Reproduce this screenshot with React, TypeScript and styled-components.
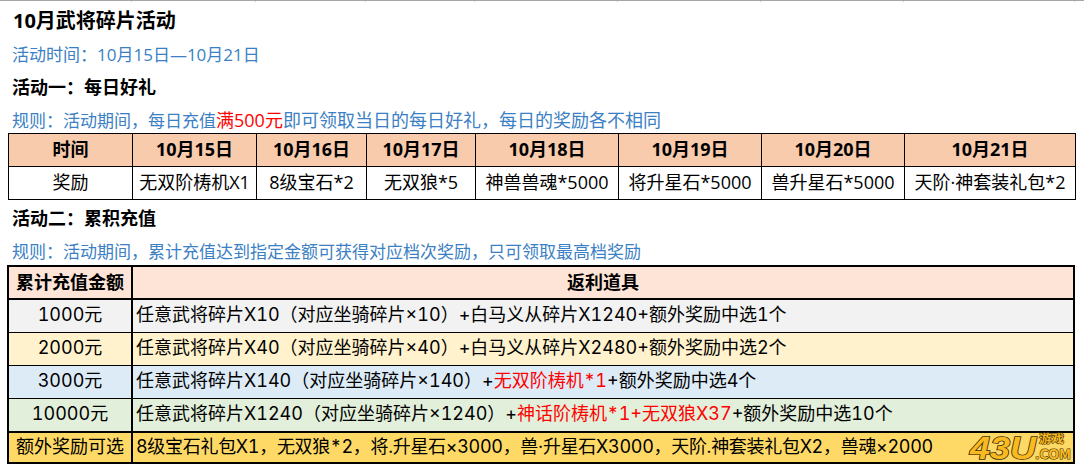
import React from 'react'
import styled, { createGlobalStyle } from 'styled-components'

const GlobalStyle = createGlobalStyle`
  html, body {
    margin: 0;
    padding: 0;
    background: #fff;
    color: #000;
    font-family: "Open Sans", "Noto Sans CJK SC", sans-serif;
  }
`

const dailyColumns = [124, 124, 110, 109, 143, 143, 143, 171]
const dailyRows = [
  ['时间', '10月15日', '10月16日', '10月17日', '10月18日', '10月19日', '10月20日', '10月21日'],
  ['奖励', '无双阶梼机X1', '8级宝石*2', '无双狼*5', '神兽兽魂*5000', '将升星石*5000', '兽升星石*5000', '天阶·神套装礼包*2'],
]

const Red = styled.span`
  color: #ff0000;
`

const RuleTail = styled.span`
  font-size: 18px;
`

const rebateRows: { tone: string; amount: string; content: React.ReactNode }[] = [
  {
    tone: '#f2f2f2',
    amount: '1000元',
    content: '任意武将碎片X10（对应坐骑碎片×10）+白马义从碎片X1240+额外奖励中选1个',
  },
  {
    tone: '#fff2cc',
    amount: '2000元',
    content: '任意武将碎片X40（对应坐骑碎片×40）+白马义从碎片X2480+额外奖励中选2个',
  },
  {
    tone: '#ddebf7',
    amount: '3000元',
    content: (
      <>
        任意武将碎片X140（对应坐骑碎片×140）+<Red>无双阶梼机*1</Red>+额外奖励中选4个
      </>
    ),
  },
  {
    tone: '#e2efda',
    amount: '10000元',
    content: (
      <>
        任意武将碎片X1240（对应坐骑碎片×1240）+<Red>神话阶梼机*1+无双狼X37</Red>+额外奖励中选10个
      </>
    ),
  },
]

export default function App() {
  return (
    <Page>
      <GlobalStyle />
      <Ruler>
        {dailyColumns.map((w, i) => (
          <RulerCell key={i} $width={w} />
        ))}
      </Ruler>
      <Title>10月武将碎片活动</Title>
      <Note $height={34}>活动时间：10月15日—10月21日</Note>
      <Heading $height={32}>活动一：每日好礼</Heading>
      <Note $height={33}>
        规则：活动期间，每日充值
        <RuleTail>
          <Red>满500元</Red>即可领取当日的每日好礼，每日的奖励各不相同
        </RuleTail>
      </Note>
      <DailyTable>
        <colgroup>
          {dailyColumns.map((w, i) => (
            <col key={i} style={{ width: w }} />
          ))}
        </colgroup>
        <tbody>
          <tr>
            {dailyRows[0].map((t) => (
              <DailyHead key={t}>{t}</DailyHead>
            ))}
          </tr>
          <tr>
            {dailyRows[1].map((t) => (
              <DailyCell key={t}>{t}</DailyCell>
            ))}
          </tr>
        </tbody>
      </DailyTable>
      <Heading $height={31}>活动二：累积充值</Heading>
      <Note $height={34}>规则：活动期间，累计充值达到指定金额可获得对应档次奖励，只可领取最高档奖励</Note>
      <RebateWrap>
        <RebateTable>
          <colgroup>
            <col style={{ width: 124 }} />
            <col />
          </colgroup>
          <tbody>
            <tr>
              <RebateHead>累计充值金额</RebateHead>
              <RebateHead>返利道具</RebateHead>
            </tr>
            {rebateRows.map((row) => (
              <RebateRow key={row.amount} $tone={row.tone}>
                <AmountCell>{row.amount}</AmountCell>
                <ContentCell>{row.content}</ContentCell>
              </RebateRow>
            ))}
            <ExtraRow>
              <AmountCell>额外奖励可选</AmountCell>
              <ContentCell>8级宝石礼包X1，无双狼*2，将.升星石×3000，兽·升星石X3000，天阶.神套装礼包X2，兽魂×2000</ContentCell>
            </ExtraRow>
          </tbody>
        </RebateTable>
        <Logo viewBox="0 0 104 30" aria-label="43U游戏">
          <LogoDigits x="2" y="27" textLength="66" lengthAdjust="spacingAndGlyphs">
            43U
          </LogoDigits>
          <LogoSmall x="71" y="11" fontSize="11" textLength="25" lengthAdjust="spacingAndGlyphs">
            游戏
          </LogoSmall>
          <LogoSmall x="67" y="27" fontSize="13" textLength="36" lengthAdjust="spacingAndGlyphs">
            .COM
          </LogoSmall>
        </Logo>
      </RebateWrap>
    </Page>
  )
}

const Page = styled.div`
  width: 1084px;
  height: 470px;
  overflow: hidden;
  box-sizing: border-box;
  background: #fff;
`

const Ruler = styled.div`
  display: flex;
  height: 1px;
  padding-left: 8px;
  border-top: 1px solid #a6a6a6;
`

const RulerCell = styled.div<{ $width: number }>`
  width: ${(p) => p.$width}px;
  height: 1px;
  box-sizing: border-box;
  border-right: 1px solid #d0d0d0;
`

const Title = styled.h1`
  margin: 0;
  padding: 6px 0 0 13px;
  height: 26px;
  line-height: 26px;
  font-size: 20px;
  font-weight: 700;
`

const Note = styled.div<{ $height: number }>`
  padding: ${(p) => p.$height - 26}px 0 0 12px;
  height: 26px;
  line-height: 26px;
  font-size: 17px;
  color: #3b7fc4;
  white-space: nowrap;
`

const Heading = styled.h2<{ $height: number }>`
  margin: 0;
  padding: ${(p) => p.$height - 26}px 0 0 12px;
  height: 26px;
  line-height: 26px;
  font-size: 18px;
  font-weight: 700;
`

const DailyTable = styled.table`
  margin-left: 8px;
  width: 1067px;
  table-layout: fixed;
  border-collapse: collapse;
  border: 1px solid #000;
`

const DailyHead = styled.td`
  height: 30px;
  padding: 0 0 2px;
  border: 1px solid #000;
  background: #f8cbad;
  text-align: center;
  font-size: 18px;
  font-weight: 700;
  line-height: 20px;
  white-space: nowrap;
`

const DailyCell = styled(DailyHead)`
  background: #fff;
  font-weight: 400;
`

const RebateWrap = styled.div`
  position: relative;
  margin-left: 7px;
  width: 1068px;
`

const RebateTable = styled.table`
  width: 100%;
  table-layout: fixed;
  border-collapse: collapse;
  border: 2px solid #000;
`

const RebateHead = styled.td`
  height: 29px;
  padding: 0 0 2px;
  border: 1px solid #000;
  border-left-width: 2px;
  border-bottom-width: 2px;
  background: #fde4d6;
  text-align: center;
  font-size: 18px;
  font-weight: 700;
  line-height: 20px;
`

const RebateRow = styled.tr<{ $tone: string }>`
  background: ${(p) => p.$tone};
`

const AmountCell = styled.td`
  height: 29px;
  padding: 0 0 3px;
  border: 1px solid #000;
  text-align: center;
  font-family: "Inter", "Noto Sans CJK SC", sans-serif;
  font-variant-numeric: tabular-nums;
  font-size: 18px;
  line-height: 20px;
  white-space: nowrap;
`

const ContentCell = styled(AmountCell)`
  border-left-width: 2px;
  padding-left: 3px;
  text-align: left;
`

const ExtraRow = styled.tr`
  background: #ffd966;
  td {
    height: 28px;
    border-top-width: 2px;
    padding-bottom: 1px;
  }
  ${ContentCell} {
    letter-spacing: -0.3px;
  }
`

const Logo = styled.svg`
  position: absolute;
  right: 3px;
  bottom: 2px;
  width: 104px;
  height: 30px;
  overflow: visible;
`

const LogoDigits = styled.text`
  font-family: "Liberation Sans", sans-serif;
  font-size: 32px;
  font-weight: 700;
  font-style: italic;
  fill: #f9b91f;
  stroke: #3f3208;
  stroke-width: 1.6px;
  paint-order: stroke;
`

const LogoSmall = styled.text`
  font-family: "Noto Sans CJK SC", sans-serif;
  font-weight: 700;
  fill: #f9b91f;
  stroke: #3f3208;
  stroke-width: 1px;
  paint-order: stroke;
`
